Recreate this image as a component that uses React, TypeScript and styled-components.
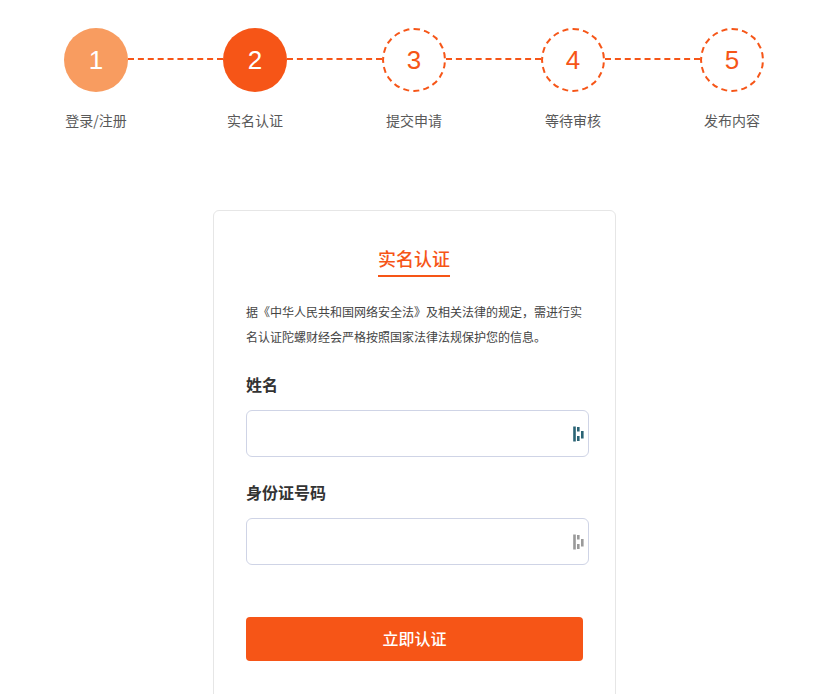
import React from "react";
import styled, { createGlobalStyle } from "styled-components";

const Global = createGlobalStyle`
  html, body { margin: 0; padding: 0; background: #fff; overflow: hidden; height: 694px; }
  body { font-family: "Liberation Sans", "Noto Sans CJK SC", sans-serif; }
  * { box-sizing: border-box; }
`;
const Page = styled.div`
  width: 816px;
  height: 694px;
  overflow: hidden;
  padding-top: 28px;
`;
const Steps = styled.div`
  display: flex;
  align-items: center;
  padding-left: 64px;
`;
const Circle = styled.div<{ $state: "done" | "active" | "todo" }>`
  width: 64px;
  height: 64px;
  flex: none;
  border-radius: 50%;
  display: flex;
  align-items: center;
  justify-content: center;
  font-size: 26px;
  line-height: 1;
  color: ${(p) => (p.$state === "todo" ? "#f65517" : "#fff")};
  background: ${(p) => (p.$state === "done" ? "#f89c60" : p.$state === "active" ? "#f65517" : "#fff")};
  border: ${(p) => (p.$state === "todo" ? "2px dashed #f65517" : "none")};
`;
const Connector = styled.div`
  width: 95px;
  flex: none;
  border-top: 2px dashed #f65517;
  margin-top: -3px;
`;
const Labels = styled.div`
  display: flex;
  gap: 95px;
  padding-left: 64px;
  margin-top: 18px;
`;
const StepLabel = styled.div`
  width: 64px;
  flex: none;
  display: flex;
  justify-content: center;
  white-space: nowrap;
  font-family: "Noto Sans CJK SC", "Liberation Sans", sans-serif;
  font-size: 14px;
  line-height: 20px;
  color: #595959;
`;
const Card = styled.div`
  width: 403px;
  height: 520px;
  margin: 80px 0 0 213px;
  padding: 32px 33px 32px 32px;
  background: #fff;
  border: 1px solid #e6e6e6;
  border-radius: 6px;
`;
const TitleRow = styled.div`
  display: flex;
  justify-content: center;
`;
const Title = styled.div`
  font-size: 18px;
  font-weight: 500;
  line-height: 26px;
  height: 34px;
  padding-top: 4px;
  color: #f65517;
  border-bottom: 2px solid #f65517;
`;
const Intro = styled.p`
  margin: 24px 0 0;
  font-size: 12px;
  line-height: 25px;
  color: #444;
  width: 338px;
`;
const FieldLabel = styled.div`
  font-size: 16px;
  font-weight: 600;
  line-height: 24px;
  color: #333;
  margin-bottom: 12px;
`;
const Field = styled.div<{ $top: number }>`
  margin-top: ${(p) => p.$top}px;
`;
const InputBox = styled.div`
  position: relative;
  width: 343px;
  height: 47px;
  border: 1px solid #cfd4e6;
  border-radius: 6px;
  background: #fff;
`;
const Input = styled.input`
  width: 100%;
  height: 100%;
  border: 0;
  outline: 0;
  background: transparent;
  padding: 0 12px;
  font-size: 14px;
`;
const Badge = styled.svg`
  position: absolute;
  right: 3px;
  top: 15px;
  width: 12px;
  height: 16px;
`;
const Submit = styled.button`
  display: block;
  width: 337px;
  height: 44px;
  margin-top: 52px;
  padding: 0 0 2px;
  border: 0;
  border-radius: 4px;
  background: #f65517;
  color: #fff;
  font-family: inherit;
  font-size: 16px;
  font-weight: 500;
`;

const KeyIcon = ({ color }: { color: string }) => (
  <Badge viewBox="0 0 12 16" fill={color}>
    <rect x="0.2" y="0.5" width="2.6" height="15" />
    <rect x="4" y="1" width="2.6" height="4.5" />
    <rect x="4" y="10" width="2.6" height="5" />
    <rect x="8" y="5" width="2.6" height="7.5" />
  </Badge>
);

const steps: { n: number; label: string; state: "done" | "active" | "todo" }[] = [
  { n: 1, label: "登录/注册", state: "done" },
  { n: 2, label: "实名认证", state: "active" },
  { n: 3, label: "提交申请", state: "todo" },
  { n: 4, label: "等待审核", state: "todo" },
  { n: 5, label: "发布内容", state: "todo" },
];

export default function App() {
  return (
    <Page>
      <Global />
      <Steps>
        {steps.map((s, i) => (
          <React.Fragment key={s.n}>
            <Circle $state={s.state}>{s.n}</Circle>
            {i < steps.length - 1 && <Connector />}
          </React.Fragment>
        ))}
      </Steps>
      <Labels>
        {steps.map((s) => (
          <StepLabel key={s.n}>{s.label}</StepLabel>
        ))}
      </Labels>
      <Card>
        <TitleRow>
          <Title>实名认证</Title>
        </TitleRow>
        <Intro>据《中华人民共和国网络安全法》及相关法律的规定，需进行实名认证陀螺财经会严格按照国家法律法规保护您的信息。</Intro>
        <Field $top={23}>
          <FieldLabel>姓名</FieldLabel>
          <InputBox>
            <Input />
            <KeyIcon color="#2b6475" />
          </InputBox>
        </Field>
        <Field $top={25}>
          <FieldLabel>身份证号码</FieldLabel>
          <InputBox>
            <Input />
            <KeyIcon color="#9a9a9a" />
          </InputBox>
        </Field>
        <Submit>立即认证</Submit>
      </Card>
    </Page>
  );
}
